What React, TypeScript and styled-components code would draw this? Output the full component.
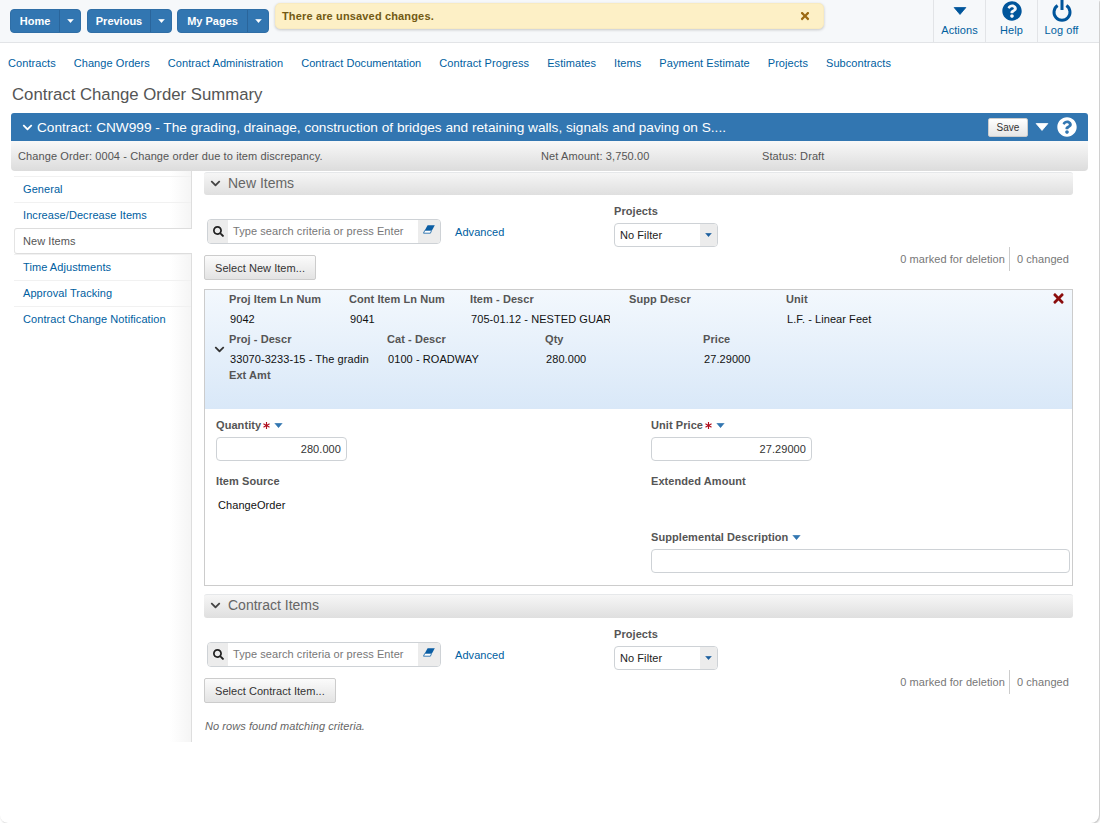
import React, { FC, ReactNode } from 'react'
import styled, { createGlobalStyle } from 'styled-components'
import {
  FaAsterisk,
  FaChevronDown,
  FaQuestionCircle,
  FaSearch,
  FaTimes,
} from 'react-icons/fa'

const blue = '#3276b1'
const link = '#00609f'
const label = '#555'

const GlobalStyle = createGlobalStyle`
  html, body {
    margin: 0;
    padding: 0;
    background: #fff;
  }
  body {
    font-family: "Liberation Sans", Arial, sans-serif;
    font-size: 11px;
    letter-spacing: 0.07px;
    color: #333;
  }
  * {
    box-sizing: border-box;
  }
`

const Page = styled.div`
  width: 1099px;
  height: 823px;
  background: #fff;
  border-radius: 0 0 8px 8px;
  box-shadow: 1px 1px 2px rgba(0, 0, 0, 0.25);
  overflow: hidden;
`

const Header = styled.header`
  display: flex;
  height: 43px;
  padding-left: 10px;
  background: #f6f8fa;
  border-bottom: 1px solid #e2e4e7;
`

const HomeButtons = styled.div`
  display: flex;
  gap: 5px;
  padding-top: 9px;
`

const SplitButton = styled.div`
  display: flex;
  height: 24px;
  background: ${blue};
  border: 1px solid #2f6ea6;
  border-radius: 4px;
  color: #fff;
  font-weight: bold;
  font-size: 11px;
  letter-spacing: 0;
  line-height: 22px;
  &:first-child {
    margin-right: 1px;
  }
`

const SplitLabel = styled.span<{ $w: number }>`
  width: ${(p) => p.$w}px;
  text-align: center;
  border-right: 1px solid #2a659b;
`

const SplitCaret = styled.span`
  display: flex;
  align-items: center;
  justify-content: center;
  width: 20px;
`

const Toast = styled.div`
  display: flex;
  align-items: center;
  justify-content: space-between;
  width: 549px;
  height: 26px;
  margin: 3px 0 0 6px;
  padding: 0 12px 0 6px;
  background: #fdf0c6;
  border: 1px solid #f9ebc0;
  border-radius: 5px;
  box-shadow: 0 1px 3px rgba(0, 0, 0, 0.2);
  color: #725a14;
  font-weight: bold;
  letter-spacing: 0.15px;
  svg {
    color: #9c6a14;
    font-size: 12px;
  }
`

const Actions = styled.div`
  display: flex;
  margin-left: auto;
  margin-right: 10px;
`

const Action = styled.div<{ $shift?: number }>`
  display: flex;
  flex-direction: column;
  align-items: center;
  width: 52px;
  padding-right: ${(p) => p.$shift ?? 0}px;
  border-left: 1px solid #e2e4e7;
  color: ${link};
  font-size: 11px;
  line-height: 13px;
`

const ActionIcon = styled.div`
  display: flex;
  align-items: center;
  justify-content: center;
  height: 22px;
  margin-bottom: 2px;
  font-size: 20px;
  color: #00559b;
`

const Nav = styled.nav`
  display: flex;
  align-items: center;
  gap: 18px;
  height: 40px;
  padding-left: 8px;
  color: ${link};
`

const Title = styled.h1`
  height: 30px;
  margin: 0;
  padding: 2px 0 0 12px;
  font-size: 16.75px;
  font-weight: normal;
  letter-spacing: 0;
  line-height: 20px;
  color: #555;
`

const ContractBar = styled.div`
  display: flex;
  align-items: center;
  height: 28px;
  margin: 0 11px;
  padding: 0 11px;
  background: ${blue};
  border-radius: 3px 3px 0 0;
  color: #fff;
  font-size: 13.65px;
  letter-spacing: 0;
`

const BarChevron = styled(FaChevronDown)`
  font-size: 11px;
  margin-right: 4px;
`

const SaveButton = styled.button`
  width: 40px;
  height: 19px;
  margin-left: auto;
  padding: 0;
  background: linear-gradient(#fff, #e6e6e6);
  border: 1px solid #ccc;
  border-radius: 2px;
  color: #333;
  font: 10px "Liberation Sans", Arial, sans-serif;
`

const BarCaret = styled.span`
  display: flex;
  margin-left: 7px;
`

const BarHelp = styled(FaQuestionCircle)`
  font-size: 20px;
  margin-left: 8px;
`

const SubBar = styled.div`
  display: flex;
  align-items: center;
  height: 30px;
  margin: 0 11px;
  padding-left: 7px;
  background: linear-gradient(#f8f8f8, #dcdcdc);
  border-radius: 0 0 4px 4px;
  color: #555;
  font-size: 11px;
  letter-spacing: 0.1px;
  white-space: nowrap;
`

const SubCell = styled.span<{ $w: number }>`
  width: ${(p) => p.$w}px;
`

const Main = styled.main`
  display: flex;
  height: 571px;
`

const Sidebar = styled.aside`
  width: 192px;
  padding: 5px 0 0 14px;
  background: linear-gradient(to right, #fff 170px, #f5f5f5 191px);
  border-right: 1px solid #dedede;
`

const SideItem = styled.div<{ $active?: boolean }>`
  display: flex;
  align-items: center;
  height: 26px;
  padding: ${(p) => (p.$active ? '0 0 0 8px' : '0 0 2px 9px')};
  color: ${(p) => (p.$active ? label : link)};
  background: ${(p) => (p.$active ? '#fff' : 'transparent')};
  border-top: 1px solid ${(p) => (p.$active ? '#ddd' : '#f1f1f1')};
  border-bottom: ${(p) => (p.$active ? '1px solid #ddd' : 'none')};
  border-left: ${(p) => (p.$active ? '1px solid #e4e4e4' : 'none')};
  margin-right: ${(p) => (p.$active ? '-1px' : '0')};
  border-radius: ${(p) => (p.$active ? '3px 0 0 3px' : '0')};
`

const Content = styled.section`
  width: 869px;
  margin-left: 12px;
  padding-top: 1px;
`

const SectionHeader = styled.div<{ $h: number }>`
  display: flex;
  align-items: center;
  height: ${(p) => p.$h}px;
  padding: 0 0 ${(p) => p.$h - 21}px 6px;
  background: linear-gradient(#f6f6f6, #dfdfdf);
  border-top: 1px solid #e6e8ea;
  border-radius: 3px;
  color: #666;
  font-size: 14px;
  letter-spacing: 0;
  svg {
    font-size: 11px;
    color: #444;
    margin-right: 7px;
  }
`

const Toolbar = styled.div`
  display: flex;
  height: 94px;
`

const ToolLeft = styled.div`
  width: 410px;
  padding-top: 24px;
`

const SearchRow = styled.div`
  display: flex;
  align-items: center;
  margin: 0 0 11px 3px;
`

const SearchBox = styled.div`
  display: flex;
  width: 234px;
  height: 25px;
  background: #fff;
  border: 1px solid #ced2d6;
  border-radius: 4px;
  overflow: hidden;
`

const SearchAddon = styled.span<{ $w: number }>`
  display: flex;
  align-items: center;
  justify-content: center;
  width: ${(p) => p.$w}px;
  background: #ececec;
  color: #222;
  font-size: 11px;
`

const EraserAddon = styled(SearchAddon)`
  padding-bottom: 5px;
`

const SearchText = styled.span`
  flex: 1;
  padding-left: 5px;
  line-height: 22px;
  color: #777;
  white-space: nowrap;
`

const Advanced = styled.span`
  margin-left: 14px;
  color: ${link};
`

const GreyButton = styled.button`
  display: block;
  height: 25px;
  padding: 0 10px;
  background: linear-gradient(#fbfbfb, #e3e3e3);
  border: 1px solid #ccc;
  border-radius: 2px;
  color: #333;
  font: 11px "Liberation Sans", Arial, sans-serif;
  letter-spacing: 0.04px;
`

const ToolFilter = styled.div`
  padding-top: 10px;
`

const FilterLabel = styled.div`
  height: 12px;
  line-height: 12px;
  margin-bottom: 6px;
  color: ${label};
  font-weight: bold;
`

const Select = styled.div`
  display: flex;
  width: 104px;
  height: 24px;
  background: #fff;
  border: 1px solid #ced2d6;
  border-radius: 4px;
  overflow: hidden;
  color: #222;
  line-height: 22px;
`

const SelectText = styled.span`
  flex: 1;
  padding-left: 5px;
`

const SelectCaret = styled.span`
  display: flex;
  align-items: center;
  justify-content: center;
  width: 17px;
  background: #ececec;
`

const Counts = styled.div`
  display: flex;
  height: 24px;
  margin: 52px 4px 0 auto;
  color: #777;
  line-height: 24px;
`

const Count = styled.span<{ $divided?: boolean }>`
  padding: ${(p) => (p.$divided ? '0 4px 0 0' : '0 0 0 7px')};
  border-right: ${(p) => (p.$divided ? '1px solid #ccc' : 'none')};
`

const ItemPanel = styled.div`
  height: 297px;
  margin-bottom: 8px;
  border: 1px solid #ccc;
`

const Summary = styled.div`
  display: flex;
  height: 119px;
  background: linear-gradient(#f3f8fd, #d9e8f8);
`

const SummaryToggle = styled.div`
  display: flex;
  align-items: center;
  justify-content: center;
  width: 24px;
  padding-left: 4px;
  font-size: 11px;
  color: #333;
`

const SummaryBody = styled.div`
  flex: 1;
  padding-top: 2px;
`

const SummaryRow = styled.div<{ $cols: string }>`
  display: grid;
  grid-template-columns: ${(p) => p.$cols};
  margin-bottom: 6px;
`

const Caption = styled.div`
  height: 14px;
  line-height: 14px;
  color: ${label};
  font-weight: bold;
`

const ExtCaption = styled(Caption)`
  margin-top: -4px;
`

const CellValue = styled.div<{ $w: number }>`
  width: ${(p) => p.$w}px;
  height: 14px;
  margin-top: 6px;
  padding-left: 1px;
  line-height: 14px;
  color: #111;
  white-space: nowrap;
  overflow: hidden;
`

const Delete = styled.div`
  width: 21px;
  padding-top: 1px;
  font-size: 15px;
  color: #8b0d0d;
`

const FormGrid = styled.div`
  display: grid;
  grid-template-columns: 435px 1fr;
  padding: 9px 2px 0 11px;
`

const Field = styled.div<{ $gap: number }>`
  padding-bottom: ${(p) => p.$gap}px;
`

const FieldLabel = styled.div`
  display: flex;
  align-items: center;
  height: 14px;
  color: ${label};
  font-weight: bold;
`

const Required = styled(FaAsterisk)`
  margin-left: 2px;
  font-size: 7px;
  color: #b01020;
`

const InfoCaret = styled.span`
  display: flex;
  margin-left: 4px;
`

const Input = styled.div<{ $w?: number }>`
  width: ${(p) => (p.$w ? `${p.$w}px` : '100%')};
  height: 24px;
  margin-top: 5px;
  padding-right: 5px;
  background: #fff;
  border: 1px solid #ced2d6;
  border-radius: 4px;
  color: #333;
  line-height: 22px;
  text-align: right;
`

const FieldValue = styled.div`
  height: 14px;
  margin-top: 10px;
  padding-left: 2px;
  line-height: 14px;
  color: #111;
`

const EmptyRows = styled.div`
  padding: 8px 0 0 1px;
  color: #666;
  font-style: italic;
`

const Caret: FC<{ w: number; h: number; color: string }> = ({ w, h, color }) => (
  <svg width={w} height={h} viewBox="0 0 10 6">
    <path d="M0.6 0.4h8.8L5 5.6z" fill={color} stroke={color} strokeWidth="0.6" strokeLinejoin="round" />
  </svg>
)

const PowerIcon: FC = () => (
  <svg width="20" height="22" viewBox="0 0 20 22" fill="none" stroke="#00559b" strokeWidth="3">
    <path d="M5.6 5.6a8 8 0 1 0 8.8 0" />
    <path d="M10 0v10" />
  </svg>
)

const EraserIcon: FC = () => (
  <svg width="12" height="9" viewBox="0 0 12 9">
    <path d="M4.6 0.2h7.2L9.2 5H2z" fill="#0b5ea4" />
    <path d="M1.8 5.4h6.8L7.4 8.2H0.5z" fill="#fff" stroke="#0b5ea4" strokeWidth="0.8" />
  </svg>
)

const navItems = [
  'Contracts',
  'Change Orders',
  'Contract Administration',
  'Contract Documentation',
  'Contract Progress',
  'Estimates',
  'Items',
  'Payment Estimate',
  'Projects',
  'Subcontracts',
]

const sideItems = [
  'General',
  'Increase/Decrease Items',
  'New Items',
  'Time Adjustments',
  'Approval Tracking',
  'Contract Change Notification',
]

const firstRow = [
  ['Proj Item Ln Num', '9042', 100],
  ['Cont Item Ln Num', '9041', 100],
  ['Item - Descr', '705-01.12 - NESTED GUARDRAIL', 140],
  ['Supp Descr', '', 100],
  ['Unit', 'L.F. - Linear Feet', 200],
] as const

const secondRow = [
  ['Proj - Descr', '33070-3233-15 - The grading, drainage', 140],
  ['Cat - Descr', '0100 - ROADWAY', 150],
  ['Qty', '280.000', 150],
  ['Price', '27.29000', 150],
] as const

const ItemToolbar: FC<{ action: string }> = ({ action }) => (
  <Toolbar>
    <ToolLeft>
      <SearchRow>
        <SearchBox>
          <SearchAddon $w={20}>
            <FaSearch />
          </SearchAddon>
          <SearchText>Type search criteria or press Enter</SearchText>
          <EraserAddon $w={22}>
            <EraserIcon />
          </EraserAddon>
        </SearchBox>
        <Advanced>Advanced</Advanced>
      </SearchRow>
      <GreyButton>{action}</GreyButton>
    </ToolLeft>
    <ToolFilter>
      <FilterLabel>Projects</FilterLabel>
      <Select>
        <SelectText>No Filter</SelectText>
        <SelectCaret>
          <Caret w={7} h={4} color="#1c5f9e" />
        </SelectCaret>
      </Select>
    </ToolFilter>
    <Counts>
      <Count $divided>0 marked for deletion</Count>
      <Count>0 changed</Count>
    </Counts>
  </Toolbar>
)

const Section: FC<{ title: string; height: number; children?: ReactNode }> = ({ title, height, children }) => (
  <>
    <SectionHeader $h={height}>
      <FaChevronDown />
      {title}
    </SectionHeader>
    {children}
  </>
)

export default function App() {
  return (
    <Page>
      <GlobalStyle />
      <Header>
        <HomeButtons>
          {[
            ['Home', 49],
            ['Previous', 63],
            ['My Pages', 70],
          ].map(([name, w]) => (
            <SplitButton key={name}>
              <SplitLabel $w={w as number}>{name}</SplitLabel>
              <SplitCaret>
                <Caret w={7} h={4} color="#fff" />
              </SplitCaret>
            </SplitButton>
          ))}
        </HomeButtons>
        <Toast>
          There are unsaved changes.
          <FaTimes />
        </Toast>
        <Actions>
          <Action>
            <ActionIcon>
              <Caret w={14} h={8} color="#00559b" />
            </ActionIcon>
            Actions
          </Action>
          <Action>
            <ActionIcon>
              <FaQuestionCircle />
            </ActionIcon>
            Help
          </Action>
          <Action $shift={4}>
            <ActionIcon>
              <PowerIcon />
            </ActionIcon>
            Log off
          </Action>
        </Actions>
      </Header>
      <Nav>
        {navItems.map((item) => (
          <span key={item}>{item}</span>
        ))}
      </Nav>
      <Title>Contract Change Order Summary</Title>
      <ContractBar>
        <BarChevron />
        Contract: CNW999 - The grading, drainage, construction of bridges and retaining walls, signals and paving on S....
        <SaveButton>Save</SaveButton>
        <BarCaret>
          <Caret w={14} h={8} color="#fff" />
        </BarCaret>
        <BarHelp />
      </ContractBar>
      <SubBar>
        <SubCell $w={523}>Change Order: 0004 - Change order due to item discrepancy.</SubCell>
        <SubCell $w={221}>Net Amount: 3,750.00</SubCell>
        <SubCell $w={100}>Status: Draft</SubCell>
      </SubBar>
      <Main>
        <Sidebar>
          {sideItems.map((item) => (
            <SideItem key={item} $active={item === 'New Items'}>
              {item}
            </SideItem>
          ))}
        </Sidebar>
        <Content>
          <Section title="New Items" height={23}>
            <ItemToolbar action="Select New Item..." />
            <ItemPanel>
              <Summary>
                <SummaryToggle>
                  <FaChevronDown />
                </SummaryToggle>
                <SummaryBody>
                  <SummaryRow $cols="120px 121px 159px 157px 1fr">
                    {firstRow.map(([cap, val, w]) => (
                      <div key={cap}>
                        <Caption>{cap}</Caption>
                        <CellValue $w={w}>{val}</CellValue>
                      </div>
                    ))}
                  </SummaryRow>
                  <SummaryRow $cols="158px 158px 158px 1fr">
                    {secondRow.map(([cap, val, w]) => (
                      <div key={cap}>
                        <Caption>{cap}</Caption>
                        <CellValue $w={w}>{val}</CellValue>
                      </div>
                    ))}
                  </SummaryRow>
                  <ExtCaption>Ext Amt</ExtCaption>
                </SummaryBody>
                <Delete>
                  <FaTimes />
                </Delete>
              </Summary>
              <FormGrid>
                <Field $gap={13}>
                  <FieldLabel>
                    Quantity
                    <Required />
                    <InfoCaret>
                      <Caret w={9} h={5} color={blue} />
                    </InfoCaret>
                  </FieldLabel>
                  <Input $w={131}>280.000</Input>
                </Field>
                <Field $gap={13}>
                  <FieldLabel>
                    Unit Price
                    <Required />
                    <InfoCaret>
                      <Caret w={9} h={5} color={blue} />
                    </InfoCaret>
                  </FieldLabel>
                  <Input $w={161}>27.29000</Input>
                </Field>
                <Field $gap={18}>
                  <FieldLabel>Item Source</FieldLabel>
                  <FieldValue>ChangeOrder</FieldValue>
                </Field>
                <Field $gap={18}>
                  <FieldLabel>Extended Amount</FieldLabel>
                  <FieldValue />
                </Field>
                <span />
                <Field $gap={0}>
                  <FieldLabel>
                    Supplemental Description
                    <InfoCaret>
                      <Caret w={9} h={5} color={blue} />
                    </InfoCaret>
                  </FieldLabel>
                  <Input />
                </Field>
              </FormGrid>
            </ItemPanel>
          </Section>
          <Section title="Contract Items" height={24}>
            <ItemToolbar action="Select Contract Item..." />
            <EmptyRows>No rows found matching criteria.</EmptyRows>
          </Section>
        </Content>
      </Main>
    </Page>
  )
}
